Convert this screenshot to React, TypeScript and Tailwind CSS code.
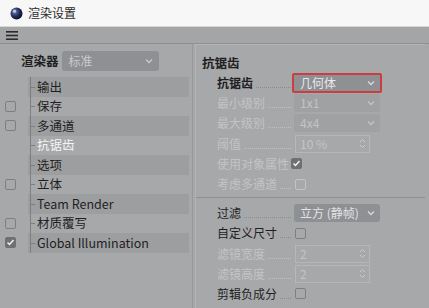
import React from "react";

const font = { fontFamily: '"Noto Sans CJK SC", "Noto Sans", sans-serif' };

function Chevron({ className = "" }: { className?: string }) {
  return (
    <svg width="8" height="6" viewBox="0 0 8 6" className={className}>
      <path d="M1 1.5 L4 4.5 L7 1.5" fill="none" stroke="currentColor" strokeWidth="1.3" />
    </svg>
  );
}

function Spinner() {
  return (
    <svg width="7" height="11" viewBox="0 0 7 11" className="text-[#c9c9cb]">
      <path d="M1 4 L3.5 1.5 L6 4" fill="none" stroke="currentColor" strokeWidth="1" />
      <path d="M1 7 L3.5 9.5 L6 7" fill="none" stroke="currentColor" strokeWidth="1" />
    </svg>
  );
}

function Box({ checked = false, light = false }: { checked?: boolean; light?: boolean }) {
  return (
    <div
      className={`w-[11px] h-[11px] rounded-[2px] border flex items-center justify-center ${
        checked ? "bg-[#6f7074] border-[#6f7074]" : light ? "border-[#c4c4c6]" : "border-[#7e7f82]"
      }`}
    >
      {checked && (
        <svg width="9" height="9" viewBox="0 0 9 9">
          <path d="M1.5 4.5 L3.5 6.5 L7.5 2" fill="none" stroke="#f2f2f2" strokeWidth="1.5" />
        </svg>
      )}
    </div>
  );
}

const leftItems: { label: string; box: boolean; checked?: boolean; selected?: boolean }[] = [
  { label: "输出", box: false },
  { label: "保存", box: true },
  { label: "多通道", box: true },
  { label: "抗锯齿", box: false, selected: true },
  { label: "选项", box: false },
  { label: "立体", box: true },
  { label: "Team Render", box: false },
  { label: "材质覆写", box: true },
  { label: "Global Illumination", box: true, checked: true },
];

function Label({ text, bold = false, disabled = false }: { text: string; bold?: boolean; disabled?: boolean }) {
  return (
    <div className="w-[74px] flex items-end whitespace-nowrap">
      <span
        className={`text-[12px] leading-[14px] ${bold ? "font-bold text-[#1f1f1f]" : disabled ? "text-[#c3c4c6]" : "text-[#1f1f1f]"}`}
      >
        {text}
      </span>
      <div
        className={`flex-1 ml-[3px] mb-[2px] border-b-[1.5px] border-dotted ${disabled ? "border-[#bfc0c2]" : "border-[#8a8b8e]"}`}
      />
    </div>
  );
}

function Row({ children }: { children: React.ReactNode }) {
  return <div className="h-[20.2px] flex items-center pl-[21px] gap-[1px]">{children}</div>;
}

export default function App() {
  return (
    <div className="w-[429px] h-[308px] bg-[#a7a8aa] flex flex-col overflow-hidden" style={font}>
      {/* title bar */}
      <div className="h-[27px] bg-[#f7f7f7] flex items-center pl-[10px] gap-[5px] border-b border-[#d8d8d8]">
        <svg width="13" height="13" viewBox="0 0 13 13">
          <defs>
            <radialGradient id="g" cx="0.35" cy="0.35" r="0.7">
              <stop offset="0" stopColor="#6f7fb8" />
              <stop offset="0.6" stopColor="#1f2a57" />
              <stop offset="1" stopColor="#0b0f22" />
            </radialGradient>
          </defs>
          <circle cx="6.5" cy="6.5" r="6" fill="url(#g)" />
          <circle cx="4.5" cy="4.2" r="1.6" fill="#d9def0" opacity="0.8" />
        </svg>
        <span className="text-[12px] text-[#2a2a2a]">渲染设置</span>
      </div>
      {/* toolbar */}
      <div className="h-[17px] bg-[#a4a5a7] flex items-center pl-[6px] border-b border-[#8e8f91]">
        <svg width="12" height="9" viewBox="0 0 12 9">
          <rect x="0" y="0" width="12" height="1.6" fill="#2b2b2b" />
          <rect x="0" y="3.7" width="12" height="1.6" fill="#2b2b2b" />
          <rect x="0" y="7.4" width="12" height="1.6" fill="#2b2b2b" />
        </svg>
      </div>
      {/* body */}
      <div className="flex flex-1">
        {/* left */}
        <div className="w-[193px] border-r border-[#98999b] flex flex-col">
          <div className="h-[33px] flex items-center pl-[21px] gap-[3px] pt-[1px]">
            <span className="text-[12.5px] font-bold text-[#1f1f1f]">渲染器</span>
            <div className="w-[97px] h-[20px] rounded-[3px] bg-[#8f9093] flex items-center justify-between pl-[7px] pr-[6px]">
              <span className="text-[12px] text-[#c9cacc]">标准</span>
              <Chevron className="text-[#c9cacc]" />
            </div>
          </div>
          <div className="flex flex-col pr-[3px]">
            {leftItems.map((it, i) => (
              <div key={i} className="h-[19.5px] flex items-center">
                <div className="w-[28px] pl-[5px] flex items-center">{it.box && <Box checked={it.checked} />}</div>
                <div
                  className={`flex-1 h-full flex items-center relative ${i % 2 === 0 ? "bg-[#9d9ea0]" : "bg-[#a7a8aa]"}`}
                >
                  <div className="absolute left-[2px] top-0 bottom-0 w-px bg-[#7d7e80]" />
                  <div className="absolute left-[2px] top-1/2 w-[5px] h-px bg-[#7d7e80]" />
                  <span
                    className={`ml-[9px] text-[12.5px] leading-none ${it.selected ? "text-[#f4f4f4]" : "text-[#1f1f1f]"}`}
                  >
                    {it.label}
                  </span>
                </div>
              </div>
            ))}
          </div>
        </div>
        {/* right */}
        <div className="flex-1 pl-[2px] pr-[4px] flex flex-col">
          <div className="border-l border-t border-[#b3b4b6] border-b border-b-[#8f9092] pt-[10px] pb-[3px]">
            <div className="pl-[6px] text-[12.5px] font-bold text-[#1f1f1f] leading-[16px] mb-[2px]">抗锯齿</div>
            <Row>
              <Label text="抗锯齿" bold />
              <div className="w-[90px] h-[20px] border-[2px] border-[#cc3d3f] rounded-[2px] bg-[#8f9093] flex items-center justify-between pl-[6px] pr-[5px]">
                <span className="text-[12px] text-[#e9e9eb]">几何体</span>
                <Chevron className="text-[#d9d9db]" />
              </div>
            </Row>
            <Row>
              <Label text="最小级别" disabled />
              <div className="ml-[2px] w-[86px] h-[18px] rounded-[2px] bg-[#a0a1a3] flex items-center justify-between pl-[6px] pr-[5px]">
                <span className="text-[12px] text-[#c3c4c6]">1x1</span>
                <Chevron className="text-[#c3c4c6]" />
              </div>
            </Row>
            <Row>
              <Label text="最大级别" disabled />
              <div className="ml-[2px] w-[86px] h-[18px] rounded-[2px] bg-[#a0a1a3] flex items-center justify-between pl-[6px] pr-[5px]">
                <span className="text-[12px] text-[#c3c4c6]">4x4</span>
                <Chevron className="text-[#c3c4c6]" />
              </div>
            </Row>
            <Row>
              <Label text="阈值" disabled />
              <div className="ml-[3px] w-[75px] h-[18px] border border-[#b6b7b9] flex items-center justify-between pl-[4px] pr-[3px]">
                <span className="text-[12px] text-[#c3c4c6]">10 %</span>
                <Spinner />
              </div>
            </Row>
            <Row>
              <span className="text-[12px] text-[#c3c4c6] leading-[14px]">使用对象属性</span>
              <div className="ml-[1px]"><Box checked /></div>
            </Row>
            <Row>
              <Label text="考虑多通道" disabled />
              <div className="ml-[3px]"><Box light /></div>
            </Row>
          </div>
          <div className="pt-[5px] border-l border-[#b3b4b6] flex-1">
            <Row>
              <Label text="过滤" />
              <div className="ml-[2px] w-[86px] h-[18px] rounded-[3px] bg-[#8f9093] flex items-center justify-between pl-[6px] pr-[5px]">
                <span className="text-[12px] text-[#e3e3e5]">立方 (静帧)</span>
                <Chevron className="text-[#d9d9db]" />
              </div>
            </Row>
            <Row>
              <Label text="自定义尺寸" />
              <div className="ml-[3px]"><Box /></div>
            </Row>
            <Row>
              <Label text="滤镜宽度" disabled />
              <div className="ml-[3px] w-[75px] h-[18px] border border-[#b6b7b9] flex items-center justify-between pl-[4px] pr-[3px]">
                <span className="text-[12px] text-[#c3c4c6]">2</span>
                <Spinner />
              </div>
            </Row>
            <Row>
              <Label text="滤镜高度" disabled />
              <div className="ml-[3px] w-[75px] h-[18px] border border-[#b6b7b9] flex items-center justify-between pl-[4px] pr-[3px]">
                <span className="text-[12px] text-[#c3c4c6]">2</span>
                <Spinner />
              </div>
            </Row>
            <Row>
              <Label text="剪辑负成分" />
              <div className="ml-[3px]"><Box /></div>
            </Row>
          </div>
        </div>
      </div>
    </div>
  );
}
